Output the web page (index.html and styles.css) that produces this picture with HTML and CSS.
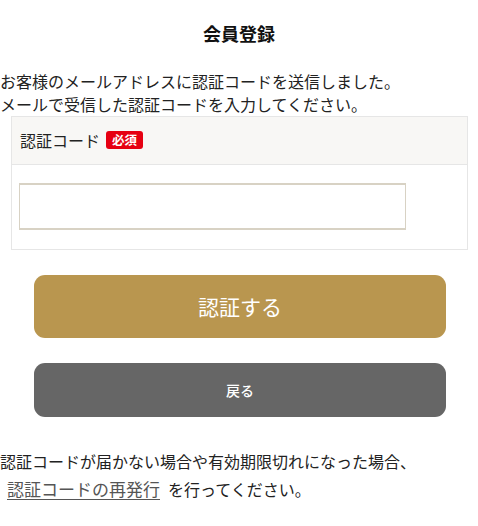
FILE: index.html
```html
<!DOCTYPE html>
<html lang="ja">
<head>
<meta charset="utf-8">
<title>会員登録</title>
<link rel="stylesheet" href="styles.css">
</head>
<body>
<main class="page">
  <h1 class="title">会員登録</h1>
  <p class="lead">お客様のメールアドレスに認証コードを送信しました。<br>メールで受信した認証コードを入力してください。</p>
  <section class="form-box">
    <div class="form-head">
      <span class="label">認証コード</span>
      <span class="badge">必須</span>
    </div>
    <div class="form-body">
      <input class="code-input" type="text">
    </div>
  </section>
  <button class="btn btn-primary" type="button">認証する</button>
  <button class="btn btn-back" type="button">戻る</button>
  <p class="note">認証コードが届かない場合や有効期限切れになった場合、<br><a class="resend" href="#">認証コードの再発行</a>を行ってください。</p>
</main>
</body>
</html>
```
FILE: styles.css
```css
* { box-sizing: border-box; }
html, body { margin: 0; padding: 0; background: #fff; }
body {
  font-family: "Noto Sans CJK JP", "Noto Sans", sans-serif;
  color: #222;
  font-size: 16px;
}
.page { width: 478px; }
.title {
  margin: 21px 0 0;
  font-size: 18px;
  line-height: 24px;
  font-weight: 700;
  text-align: center;
  color: #111;
}
.lead {
  margin: 24.5px 0 0;
  line-height: 23px;
}
.form-box {
  margin: 0 0 0 11px;
  width: 457px;
  border: 1px solid #e6e6e6;
}
.form-head {
  height: 48px;
  background: #f8f7f5;
  border-bottom: 1px solid #e6e6e6;
  display: flex;
  align-items: center;
  padding-left: 8px;
  gap: 6px;
}
.label { font-size: 16px; line-height: 20px; }
.badge {
  display: inline-flex;
  align-items: center;
  justify-content: center;
  width: 37px;
  height: 18px;
  background: #e60012;
  color: #fff;
  font-size: 12.5px;
  font-weight: 700;
  border-radius: 3px;
  line-height: 1;
}
.form-body {
  padding: 18px 0 19px 7px;
}
.code-input {
  display: block;
  width: 387px;
  height: 47px;
  border: 2px solid #d8d2c4;
  border-width: 2px 1.5px;
  background: #fff;
  margin: 0;
  padding: 0 8px;
  font: inherit;
}
.btn {
  display: flex;
  align-items: center;
  justify-content: center;
  margin-left: 34px;
  width: 412px;
  border: 0;
  border-radius: 11px;
  color: #fff;
  font-family: inherit;
  cursor: pointer;
}
.btn-primary {
  margin-top: 25px;
  height: 63px;
  background: #b9964f;
  font-size: 21px;
  font-weight: 400;
}
.btn-back {
  margin-top: 25px;
  height: 54px;
  background: #666666;
  font-size: 14px;
  font-weight: 500;
}
.note {
  margin: 31px 0 0;
  line-height: 27px;
}
.resend {
  color: #555;
  text-decoration: underline;
  text-underline-offset: 3px;
  font-size: 17px;
  margin: 0 8px 0 7px;
}
```
